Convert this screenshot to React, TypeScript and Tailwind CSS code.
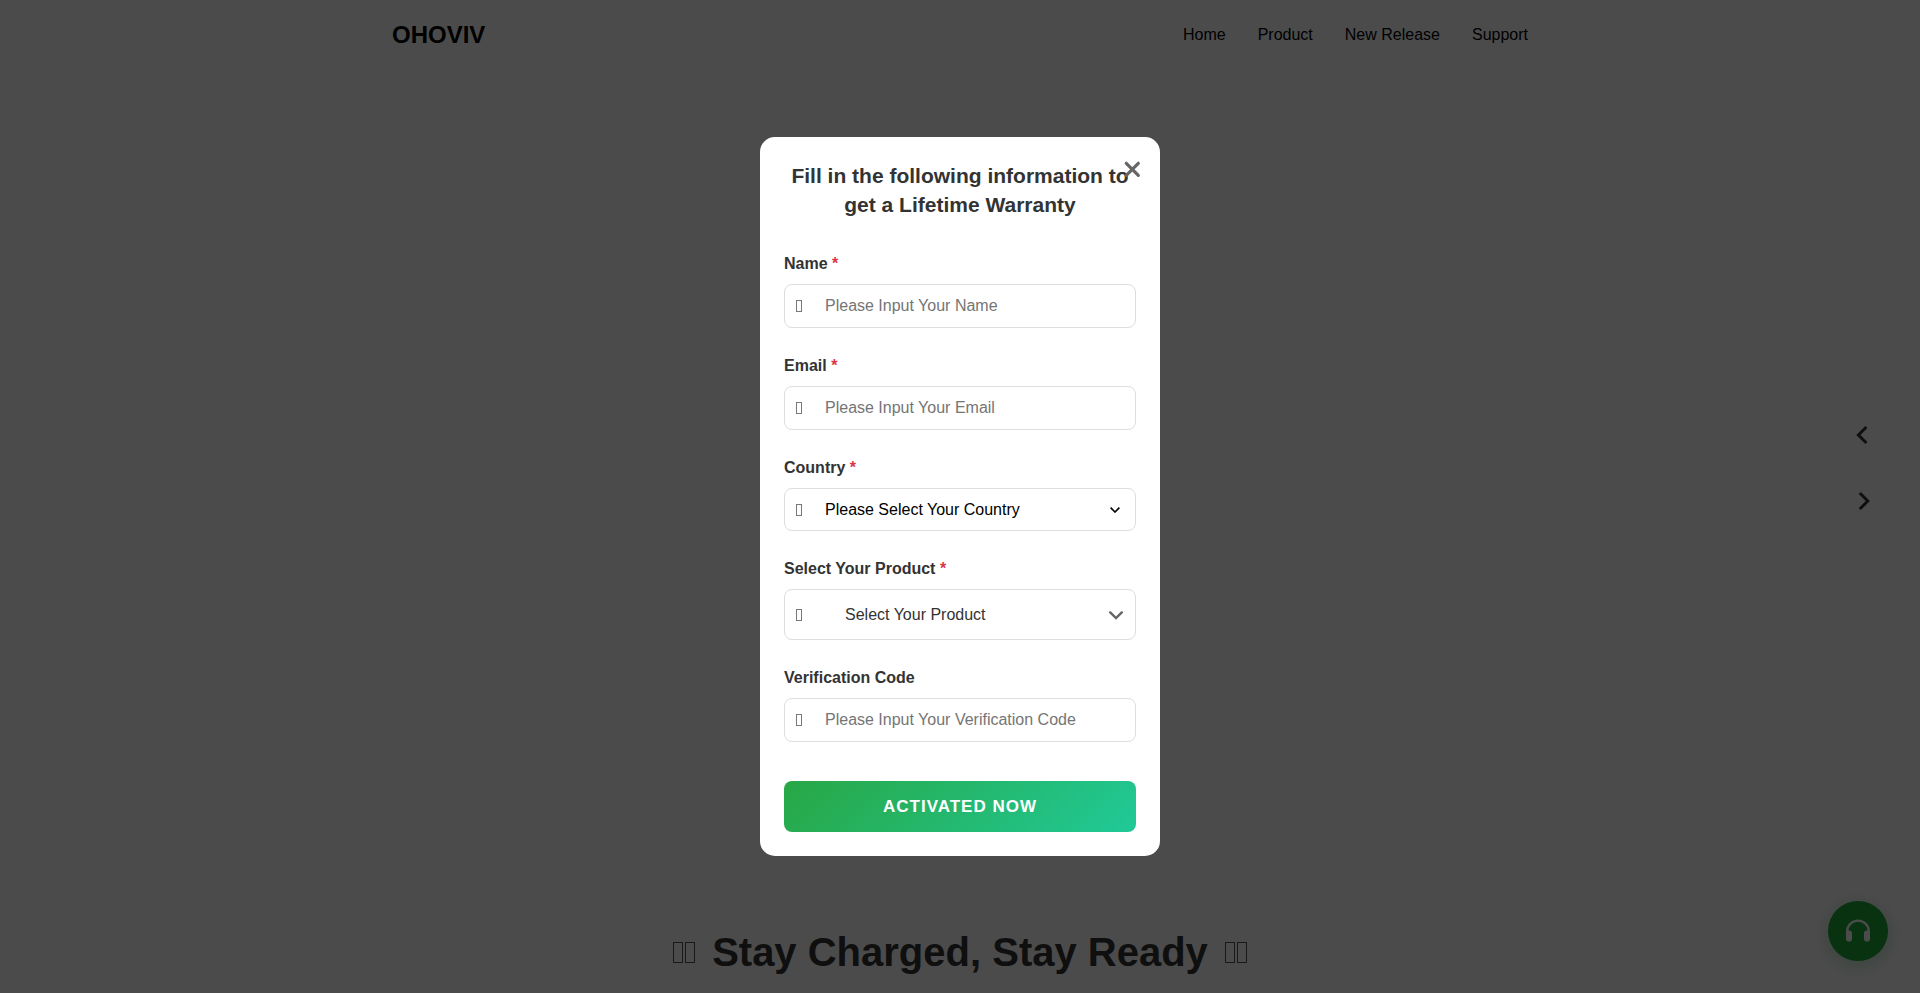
import React, { useState } from "react";

const navLinks = ["Home", "Product", "New Release", "Support"];

const inputClass =
  "block h-11 w-full rounded-lg border border-[#dddddd] bg-white pl-10 pr-3 text-base text-[#333333] placeholder:text-[#757575] focus:border-[#28a745] focus:outline-none";

type FieldProps = {
  id: string;
  label: string;
  required?: boolean;
  children: React.ReactNode;
};

function Field({ id, label, required, children }: FieldProps) {
  return (
    <div>
      <label htmlFor={id} className="mb-2 block text-base font-bold text-[#333333]">
        {label} {required && <span className="text-[#dc3545]">*</span>}
      </label>
      <div className="relative">
        <span
          aria-hidden="true"
          className="pointer-events-none absolute inset-y-0 left-3 z-10 my-auto h-3 w-[6px] border border-[#777777]"
        />
        {children}
      </div>
    </div>
  );
}

function SiteHeader() {
  return (
    <header className="shadow-[0_2px_20px_rgba(0,0,0,0.02)]">
      <div className="mx-auto flex h-[70px] max-w-[1200px] items-center justify-between px-8">
        <a href="#home" className="text-2xl font-bold text-black">
          OHOVIV
        </a>
        <nav className="flex gap-8">
          {navLinks.map((link) => (
            <a key={link} href="#" className="text-base text-black">
              {link}
            </a>
          ))}
        </nav>
      </div>
    </header>
  );
}

function TitleMark() {
  return (
    <span aria-hidden="true" className="flex gap-[2px]">
      <span className="h-[21px] w-[10px] border border-[#555555]" />
      <span className="h-[21px] w-[10px] border border-[#555555]" />
    </span>
  );
}

function WarrantyDialog({ onClose }: { onClose: () => void }) {
  return (
    <div className="fixed inset-0 z-50 flex items-center justify-center bg-black/70">
      <div
        role="dialog"
        aria-modal="true"
        aria-labelledby="dialog-title"
        className="relative w-full max-w-[400px] rounded-[15px] bg-white p-6"
      >
        <button
          type="button"
          aria-label="Close"
          onClick={onClose}
          className="absolute right-4 top-5 flex size-6 items-center justify-center text-[#666666]"
        >
          <svg width="18" height="18" viewBox="0 0 18 18" fill="none" stroke="currentColor" strokeWidth="3.2" strokeLinecap="round">
            <path d="M3.3 3.3l12 12M15.3 3.3l-12 12" />
          </svg>
        </button>
        <h2 id="dialog-title" className="mb-[33px] text-center text-[21px] leading-[29px] font-bold text-[#333333]">
          Fill in the following information to get a Lifetime Warranty
        </h2>
        <form onSubmit={(e) => e.preventDefault()}>
          <div className="flex flex-col gap-[26px]">
            <Field id="name" label="Name" required>
              <input id="name" type="text" placeholder="Please Input Your Name" className={inputClass} />
            </Field>
            <Field id="email" label="Email" required>
              <input id="email" type="email" placeholder="Please Input Your Email" className={inputClass} />
            </Field>
            <Field id="country" label="Country" required>
              <select
                id="country"
                className="block h-[43px] w-full appearance-none rounded-lg border border-[#dddddd] bg-white pl-10 pr-10 text-base text-black"
              >
                <option>Please Select Your Country</option>
                <option>United States</option>
                <option>Canada</option>
              </select>
              <svg
                className="pointer-events-none absolute inset-y-0 right-4 my-auto text-black"
                width="10"
                height="6"
                viewBox="0 0 10 6"
                fill="none"
                stroke="currentColor"
                strokeWidth="1.6"
              >
                <path d="M0.6 0.6L5 5l4.4-4.4" />
              </svg>
            </Field>
            <Field id="product" label="Select Your Product" required>
              <button
                id="product"
                type="button"
                className="flex h-[51px] w-full items-center justify-between rounded-lg border border-[#dddddd] bg-white pl-[60px] pr-3 text-base text-[#333333]"
              >
                Select Your Product
                <svg width="14" height="10" viewBox="0 0 14 10" fill="none" stroke="#666666" strokeWidth="2.4" strokeLinecap="round">
                  <path d="M1.2 2.4L7 8l5.8-5.6" />
                </svg>
              </button>
            </Field>
            <Field id="code" label="Verification Code">
              <input id="code" type="text" placeholder="Please Input Your Verification Code" className={inputClass} />
            </Field>
          </div>
          <button
            type="submit"
            className="mt-[39px] block h-[51px] w-full rounded-lg bg-[linear-gradient(135deg,#28a745,#20c997)] text-[17px] font-bold tracking-[1px] text-white uppercase"
          >
            Activated Now
          </button>
        </form>
      </div>
    </div>
  );
}

export default function App() {
  const [open, setOpen] = useState(true);

  return (
    <div className="flex h-screen flex-col overflow-hidden bg-[#fcfcfc] font-['Liberation_Sans',Arial,sans-serif]">
      <SiteHeader />
      <main className="flex flex-1 flex-col justify-end pb-[11px]">
        <div className="flex items-center justify-center gap-[17px] text-[#333333]">
          <TitleMark />
          <h1 className="text-[40px] leading-[60px] font-bold">Stay Charged, Stay Ready</h1>
          <TitleMark />
        </div>
      </main>

      <div className="fixed right-[34px] top-[411px] flex flex-col gap-[18px]">
        <button
          type="button"
          aria-label="Previous slide"
          className="flex size-12 items-center justify-center rounded-full text-[#333333]"
        >
          <svg width="20" height="20" viewBox="0 0 20 20" fill="none" stroke="currentColor" strokeWidth="3">
            <path d="M14.4 2L6.4 10l8 8" />
          </svg>
        </button>
        <button
          type="button"
          aria-label="Next slide"
          className="flex size-12 items-center justify-center rounded-full text-[#333333]"
        >
          <svg width="20" height="20" viewBox="0 0 20 20" fill="none" stroke="currentColor" strokeWidth="3">
            <path d="M7.8 2l8 8-8 8" />
          </svg>
        </button>
      </div>

      <button
        type="button"
        aria-label="Customer support"
        className="fixed bottom-8 right-8 flex size-[60px] items-center justify-center rounded-full bg-[#1ea838] text-white shadow-[0_4px_20px_rgba(40,167,69,0.3)]"
      >
        <svg width="26" height="24" viewBox="0 0 26 24">
          <path d="M2.2 15v-2.6a10.8 10.8 0 0 1 21.6 0V15" fill="none" stroke="currentColor" strokeWidth="2.4" />
          <rect x="1" y="11.5" width="6" height="11" rx="2.8" fill="currentColor" />
          <rect x="19" y="11.5" width="6" height="11" rx="2.8" fill="currentColor" />
        </svg>
      </button>

      {open && <WarrantyDialog onClose={() => setOpen(false)} />}
    </div>
  );
}
